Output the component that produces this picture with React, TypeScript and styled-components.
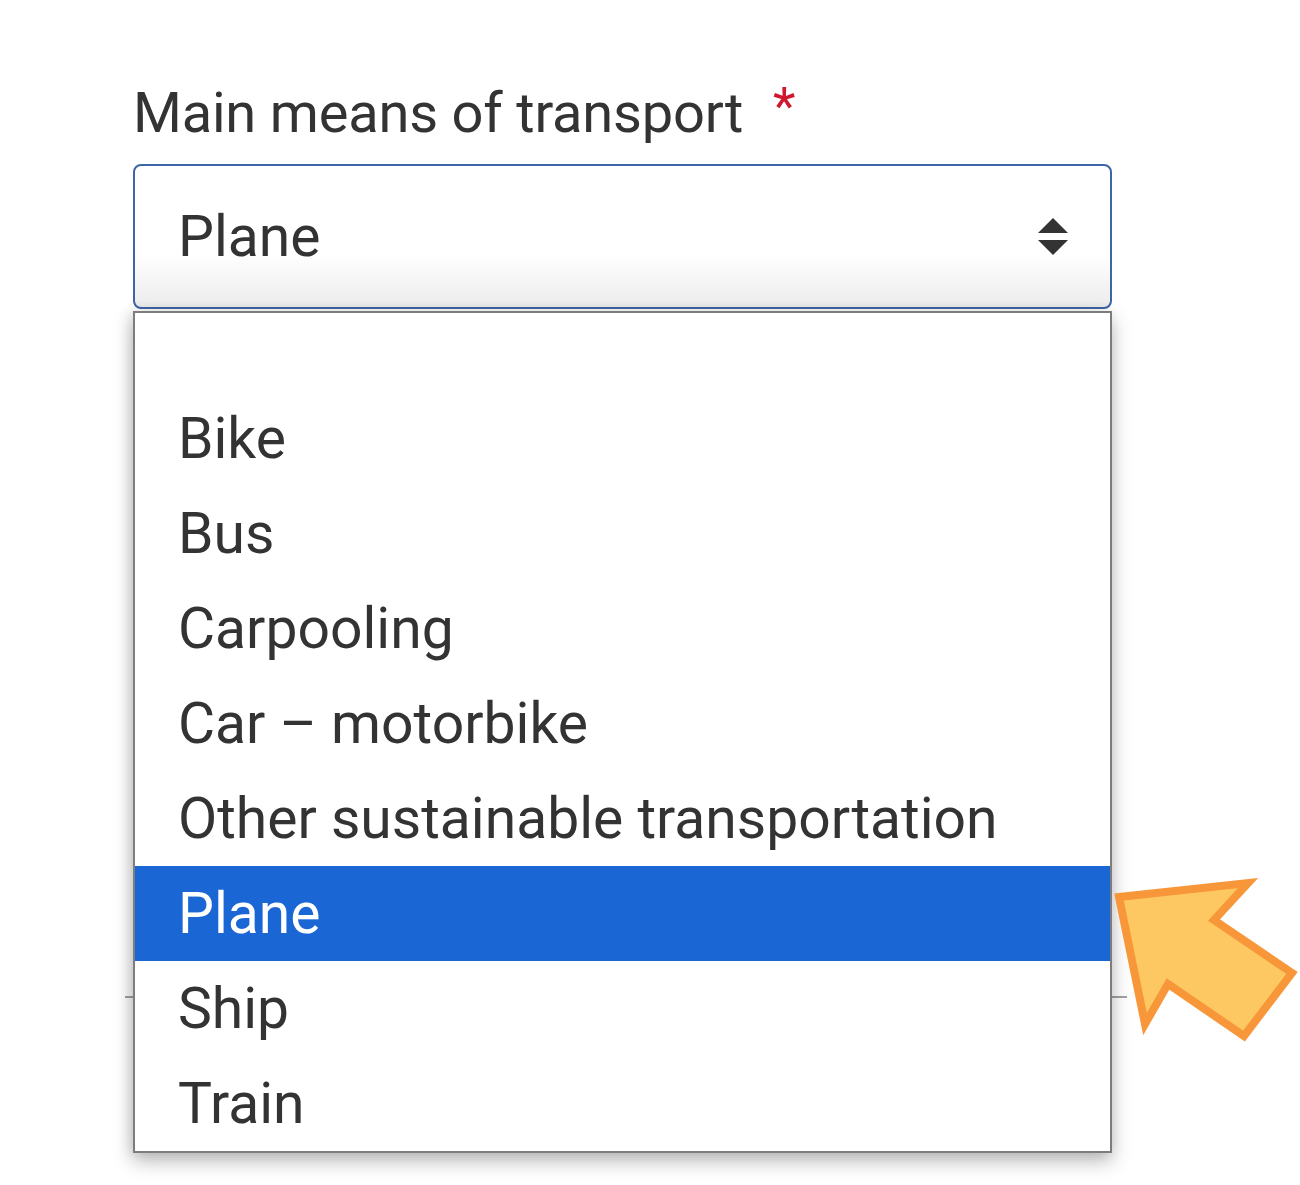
import React from "react";
import styled, { createGlobalStyle } from "styled-components";

const Global = createGlobalStyle`
  html, body { margin: 0; padding: 0; background: #ffffff; }
  body { font-family: Roboto, "Noto Sans", "Liberation Sans", sans-serif; }
  #root { width: 1300px; height: 1185px; overflow: hidden; position: relative; }
`;

const Page = styled.div`
  position: relative;
  width: 1300px;
  height: 1185px;
  box-sizing: border-box;
  padding: 72px 0 0 133px;
`;

const Field = styled.div`
  display: flex;
  flex-direction: column;
  width: 979px;
`;

const Label = styled.label`
  display: block;
  font-size: 56px;
  line-height: 70px;
  color: #333333;
  letter-spacing: -0.2px;
  margin-bottom: 16px;
  white-space: nowrap;
`;

const Required = styled.span`
  color: #d0172f;
  font-size: 52px;
  margin-left: 30px;
  vertical-align: 8px;
`;

const SelectWrap = styled.div`
  position: relative;
  width: 979px;
`;

const SelectBox = styled.div`
  box-sizing: border-box;
  height: 145px;
  border: 2px solid #3c66a6;
  border-radius: 8px;
  background: linear-gradient(to bottom, #ffffff 0%, #ffffff 62%, #ececec 100%);
  display: flex;
  align-items: center;
  justify-content: space-between;
  padding: 0 40px 0 43px;
  font-size: 57px;
  color: #333333;
`;

const Dropdown = styled.ul`
  position: absolute;
  top: calc(100% + 2px);
  left: 0;
  right: 0;
  margin: 0;
  padding: 0;
  list-style: none;
  background: #ffffff;
  border: 2px solid #7d7d7d;
  box-shadow: 0 8px 18px rgba(0, 0, 0, 0.28), -4px 0 12px rgba(0, 0, 0, 0.08);
  z-index: 2;
`;

const Option = styled.li<{ $selected?: boolean; $empty?: boolean }>`
  box-sizing: border-box;
  height: ${(p) => (p.$empty ? "78px" : "95px")};
  display: flex;
  align-items: center;
  padding-left: 43px;
  font-size: 57px;
  color: ${(p) => (p.$selected ? "#ffffff" : "#333333")};
  background: ${(p) => (p.$selected ? "#1a66d4" : "transparent")};
  white-space: nowrap;
`;

const Divider = styled.div`
  margin: 687px 0 0 -8px;
  width: 1002px;
  height: 2px;
  background: #a3a3a3;
`;

const Pointer = styled.svg`
  position: absolute;
  left: 1100px;
  top: 868px;
  z-index: 3;
`;

const Arrows = () => (
  <svg width="34" height="42" viewBox="0 0 34 42">
    <polygon points="17,2 32,17 2,17" fill="#333" />
    <polygon points="2,24 32,24 17,39" fill="#333" />
  </svg>
);

const options = [
  "Bike",
  "Bus",
  "Carpooling",
  "Car – motorbike",
  "Other sustainable transportation",
  "Plane",
  "Ship",
  "Train",
];

export default function App() {
  return (
    <>
      <Global />
      <Page>
        <Field>
          <Label>
            Main means of transport<Required>*</Required>
          </Label>
          <SelectWrap>
            <SelectBox>
              <span>Plane</span>
              <Arrows />
            </SelectBox>
            <Dropdown>
              <Option $empty />
              {options.map((o) => (
                <Option key={o} $selected={o === "Plane"}>
                  {o}
                </Option>
              ))}
            </Dropdown>
          </SelectWrap>
          <Divider />
        </Field>
        <Pointer width="200" height="190" viewBox="1100 868 200 190">
          <polygon
            points="1119,897 1248,883 1214,920 1292,973 1244,1036 1168,984 1145,1024"
            fill="#fdc862"
            stroke="#f7973a"
            strokeWidth="8"
            strokeLinejoin="miter"
          />
        </Pointer>
      </Page>
    </>
  );
}
